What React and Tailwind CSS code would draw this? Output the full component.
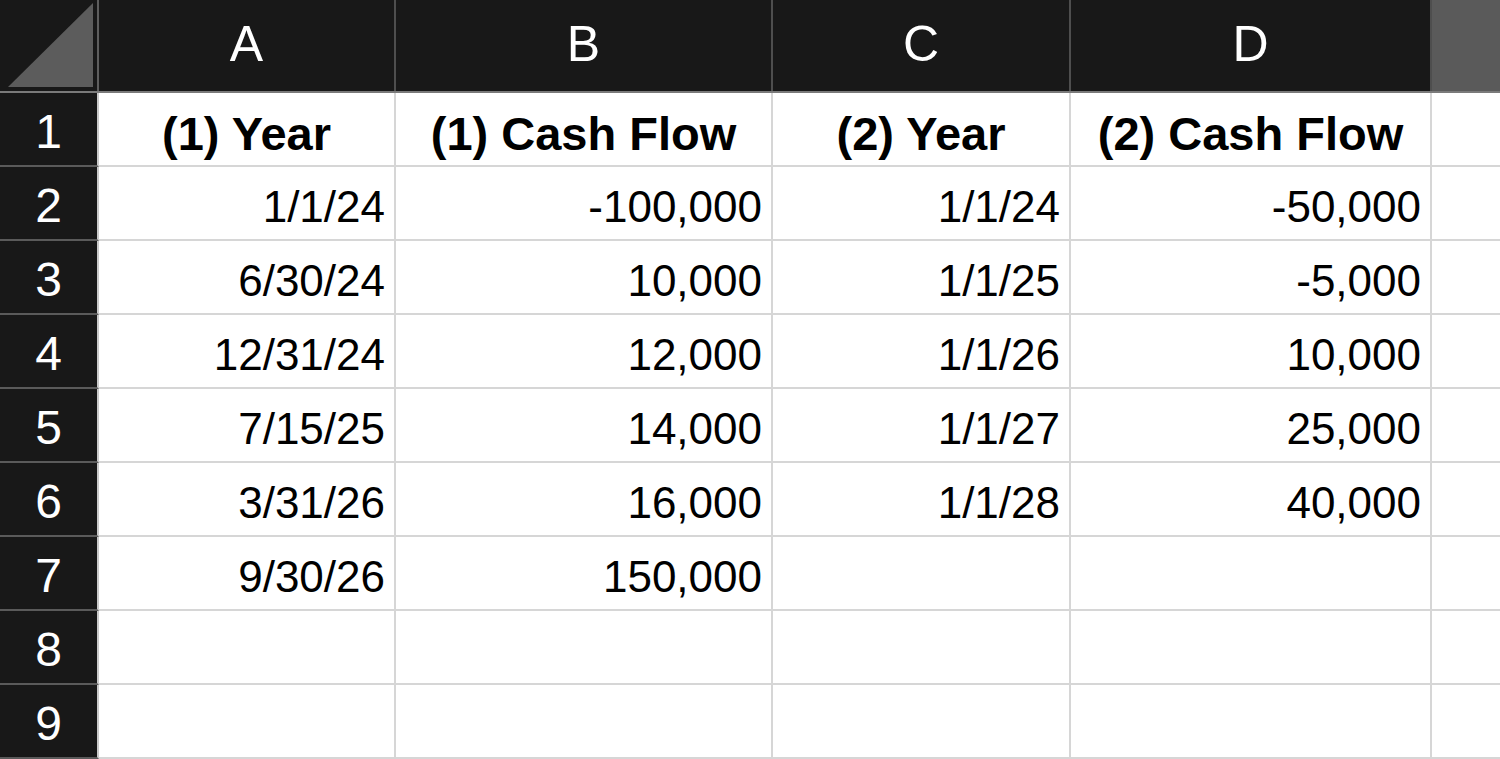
const COLS = ['A', 'B', 'C', 'D'];
const WIDTHS = ['w-[297px]', 'w-[377px]', 'w-[298px]', 'w-[361px]'];

const ROWS = [
  ['(1) Year', '(1) Cash Flow', '(2) Year', '(2) Cash Flow'],
  ['1/1/24', '-100,000', '1/1/24', '-50,000'],
  ['6/30/24', '10,000', '1/1/25', '-5,000'],
  ['12/31/24', '12,000', '1/1/26', '10,000'],
  ['7/15/25', '14,000', '1/1/27', '25,000'],
  ['3/31/26', '16,000', '1/1/28', '40,000'],
  ['9/30/26', '150,000', '', ''],
  ['', '', '', ''],
  ['', '', '', ''],
];

const font = { fontFamily: '"Liberation Sans", Arial, sans-serif' };

export default function App() {
  return (
    <div className="w-[1500px] h-[759px] overflow-hidden bg-white" style={font}>
      {/* column header strip */}
      <div className="flex h-[93px] bg-[#181818] border-b-2 border-[#7a7a7a]">
        <div className="w-[99px] shrink-0 border-r-2 border-[#5e5e5e] flex items-start pl-[8px] pt-[3px]">
          <svg width="85" height="84" viewBox="0 0 85 84">
            <polygon points="85,0 85,84 0,84" fill="#5c5c5c" />
          </svg>
        </div>
        {COLS.map((c, i) => (
          <div key={c}
            className={`${WIDTHS[i]} shrink-0 border-r-2 border-[#4e4e4e] flex items-center justify-center text-white text-[50px] font-normal pb-[2px]`}>
            {c}
          </div>
        ))}
        <div className="flex-1 bg-[#5a5a5a]" />
      </div>

      {ROWS.map((row, r) => (
        <div key={r} className="flex h-[74px]">
          <div className="w-[99px] shrink-0 bg-[#181818] border-r-2 border-r-[#c9c9c9] border-b-2 border-b-[#5a5a5a] flex items-center justify-center text-white text-[48px] pt-[5px]">
            {r + 1}
          </div>
          {row.map((v, i) => (
            <div key={i}
              className={`${WIDTHS[i]} shrink-0 border-r-2 border-b-2 border-[#d6d6d6] flex items-center ${
                r === 0
                  ? 'justify-center font-bold text-[47px] text-black pt-[10px]'
                  : 'justify-end pr-[9px] text-[44px] text-black pt-[7px]'
              }`}>
              {v}
            </div>
          ))}
          <div className="flex-1 border-b-2 border-[#d6d6d6]" />
        </div>
      ))}
    </div>
  );
}
